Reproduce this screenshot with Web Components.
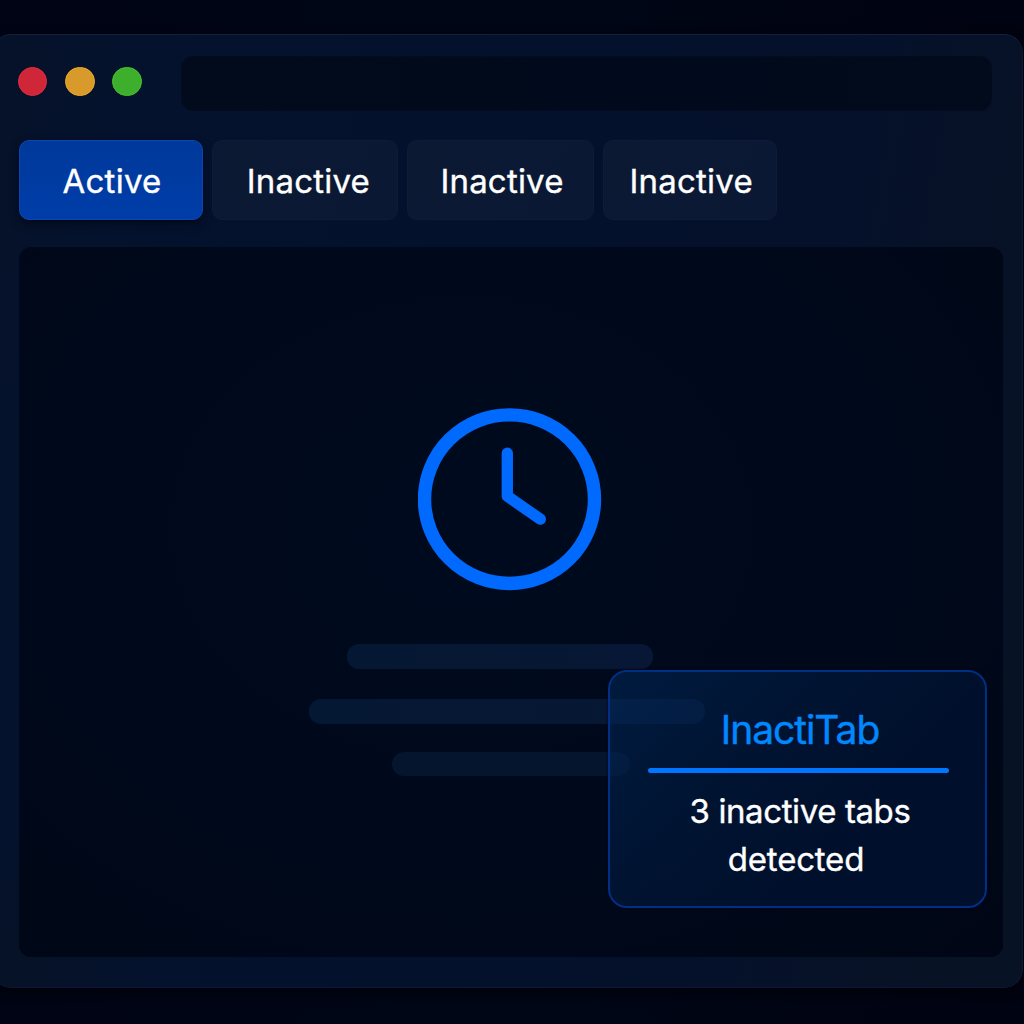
<!DOCTYPE html>
<html lang="en">
<head>
<meta charset="utf-8">
<title>InactiTab</title>
<style>
html,body{margin:0;height:100%;overflow:hidden}
body{background:linear-gradient(90deg,#000414,#000616 50%,#000311);font-family:Inter,"Liberation Sans",sans-serif;color:#fff}
</style>
</head>
<body>
<browser-window>
  <window-bar slot="bar"></window-bar>
  <tab-strip slot="tabs">
    <browser-tab active style="--w:184px;--start:42.5px;--track:.25px">Active</browser-tab>
    <browser-tab style="--w:186.5px;--start:34px">Inactive</browser-tab>
    <browser-tab style="--w:187px;--start:32.5px">Inactive</browser-tab>
    <browser-tab style="--w:174.5px;--start:26px">Inactive</browser-tab>
  </tab-strip>
  <page-view>
    <clock-icon></clock-icon>
    <skeleton-lines></skeleton-lines>
    <notice-card slot="notice">
      <span slot="title">InactiTab</span>
      <span>3 inactive tabs</span>
      <span class="second">detected</span>
    </notice-card>
  </page-view>
</browser-window>
<script>
const define = (name, html) => customElements.define(name, class extends HTMLElement {
  constructor() {
    super();
    this.attachShadow({ mode: 'open' }).innerHTML = html;
  }
});

define('browser-window', `
<style>
:host{display:block;box-sizing:border-box;height:1024px;padding-top:34px;overflow:hidden}
.frame{box-sizing:border-box;width:1031px;height:954px;margin-left:-8px;padding:21px 0 0 26px;
  border:1px solid #0c1936;border-top-color:#12203f;border-radius:19px;
  background:radial-gradient(circle at 0 100%,#061225,#06122500 150px),linear-gradient(100deg,#061229 0%,#05122d 12%,#04112c 45%,#05112b 72%,#071225 92%);
  box-shadow:0 3px 12px #000008;display:flex;flex-direction:column}
.tabs{margin-top:29px}
.page{margin-top:27px}
</style>
<div class="frame">
  <slot name="bar"></slot>
  <div class="tabs"><slot name="tabs"></slot></div>
  <div class="page"><slot></slot></div>
</div>`);

define('window-bar', `
<style>
:host{display:flex;align-items:center;height:55px}
.dots{display:flex;gap:17.7px;margin:-4px 39.2px 0 -1.2px}
i{box-sizing:border-box;width:29.5px;height:29.5px;border-radius:50%;border:1px solid}
.r{background:#cf2638;border-color:#e92b40}
.y{background:#d89a2a;border-color:#efac28}
.g{background:#3daf2d;border-color:#42c72d}
.address{width:811px;height:55px;border-radius:12px;box-sizing:border-box;
  background:linear-gradient(90deg,#010b1b,#000a1c 60%,#020b1b);border:1px solid #020c20}
</style>
<div class="dots"><i class="r"></i><i class="y"></i><i class="g"></i></div>
<div class="address"></div>`);

define('tab-strip', `
<style>:host{display:flex;gap:8.7px;height:80px}</style><slot></slot>`);

define('browser-tab', `
<style>
:host{display:flex;align-items:center;box-sizing:border-box;width:var(--w);height:79.5px;padding:2px 0 0 var(--start);
  border:1px solid #0e1c39;border-radius:10px;background:linear-gradient(120deg,#0b1933,#0a1834);
  font-size:33px;line-height:40px;letter-spacing:var(--track,.2px);white-space:nowrap;-webkit-text-stroke:.35px}
:host([active]){background:linear-gradient(180deg,#00399a,#003da9);border-color:#0848b4;
  box-shadow:0 1px 2px #000614,0 4px 10px #000a1ccc}
</style><slot></slot>`);

define('page-view', `
<style>
:host{display:block;position:relative;box-sizing:border-box;width:984px;height:710px;border-radius:12px;
  background:radial-gradient(ellipse at 45% 40%,#000a1e,#00091b 55%,#000615 100%);padding-top:161px}
.notice{position:absolute;left:589px;top:423px}
</style>
<slot></slot>
<div class="notice"><slot name="notice"></slot></div>`);

define('clock-icon', `
<style>:host{display:block;margin-left:399px;height:183px}svg{display:block}</style>
<svg width="184" height="183" viewBox="0 0 184 183" fill="none" stroke="#006aff">
  <ellipse cx="91.5" cy="91.2" rx="85" ry="84.3" stroke-width="13.4"/>
  <path d="M89.3 45.2V88.2L122.3 111.2" stroke-width="11.3" stroke-linecap="round" stroke-linejoin="round"/>
</svg>`);

define('skeleton-lines', `
<style>
:host{display:flex;flex-direction:column;align-items:flex-start;margin-top:53px}
i{height:25px;border-radius:12px;background:linear-gradient(90deg,#051833,#071735)}
.a{width:306px;margin-left:328px}
.b{width:396px;margin:30px 0 0 289.5px}
.c{width:238px;height:24px;margin:28px 0 0 373px;background:#05152e}
</style><i class="a"></i><i class="b"></i><i class="c"></i>`);

define('notice-card', `
<style>
:host{display:flex;flex-direction:column;align-items:center;box-sizing:border-box;width:379px;height:238px;
  padding:34px 0 0 5px;border:2px solid #002f86;border-radius:19px;
  background:linear-gradient(135deg,#002c6280 0%,#00193e99 42%,#00102ed9 75%,#001130d9 100%);
  box-shadow:0 0 3px #000614}
.title{font-size:39px;line-height:48px;letter-spacing:-1.05px;color:#0088ff;-webkit-text-stroke:.4px}
.rule{width:301px;height:5.5px;border-radius:3px;background:#0075ff;margin:13.5px 0 14px -3.5px}
.text{display:flex;flex-direction:column;align-items:center;font-size:33px;line-height:48px;letter-spacing:-.4px;white-space:nowrap;-webkit-text-stroke:.35px}
::slotted(.second){margin-left:-8px;letter-spacing:-.2px}
</style>
<div class="title"><slot name="title"></slot></div>
<div class="rule"></div>
<div class="text"><slot></slot></div>`);
</script>
</body>
</html>
